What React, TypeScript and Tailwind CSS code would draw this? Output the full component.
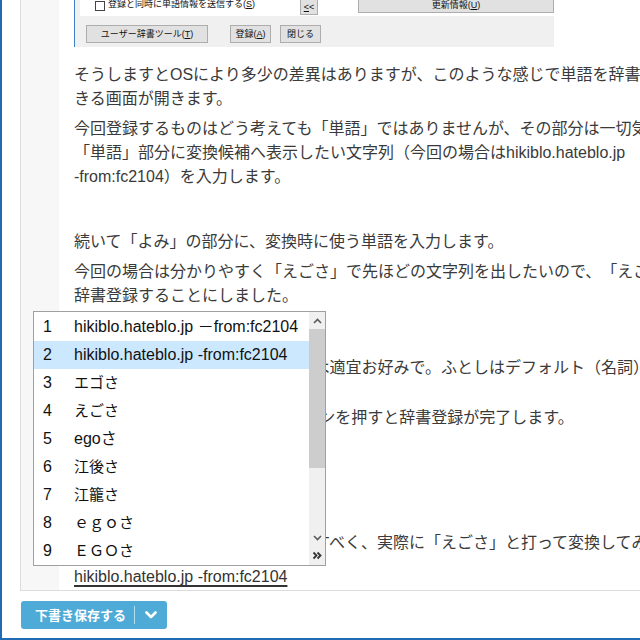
import clsx from 'clsx';

const candidates = [
  { text: 'hikiblo.hateblo.jp －from:fc2104', size: 'text-[16px]' },
  { text: 'hikiblo.hateblo.jp -from:fc2104', size: 'text-[16px]' },
  { text: 'エゴさ', size: 'text-[15px]' },
  { text: 'えごさ', size: 'text-[15px]' },
  { text: 'egoさ', size: 'text-[16px]' },
  { text: '江後さ', size: 'text-[15px]' },
  { text: '江籠さ', size: 'text-[15px]' },
  { text: 'ｅｇｏさ', size: 'text-[15px]' },
  { text: 'ＥＧＯさ', size: 'text-[15px]' },
];

const DialogShot = () => {
  return (
    <div className="flex h-[47px] w-[480px] flex-col border-l border-[#3b82c8] bg-[#f0f0f0] text-[9px] leading-[12px] text-[#111]">
      <div className="ml-[5px] flex h-[16px] items-start bg-white">
        <div className="flex w-[220px] items-start">
          <span className="ml-[15px] mt-[1px] h-[10px] w-[10px] border border-[#444] bg-white" />
          <span className="ml-[3px] -mt-[2px]">
            登録と同時に単語情報を送信する(<span className="underline">S</span>)
          </span>
        </div>
        <div className="flex h-[15px] w-[18px] items-center justify-center border-x border-b border-[#adadad] bg-[#e1e1e1]">
          <span className="underline">&lt;</span>&lt;
        </div>
        <div className="w-[40px]" />
        <div className="flex h-[13px] w-[196px] items-center justify-center border-x border-b border-[#adadad] bg-[#e1e1e1]">
          <span className="-mt-[2px]">
            更新情報(<span className="underline">U</span>)
          </span>
        </div>
      </div>
      <div className="flex flex-1 items-start pl-[11px] pt-[9px]">
        <div className="flex h-[18px] w-[122px] items-center justify-center border border-[#adadad] bg-[#e1e1e1]">
          ユーザー辞書ツール(<span className="underline">T</span>)
        </div>
        <div className="ml-[22px] flex h-[18px] w-[41px] items-center justify-center border border-[#adadad] bg-[#e1e1e1]">
          登録(<span className="underline">A</span>)
        </div>
        <div className="ml-[9px] flex h-[18px] w-[41px] items-center justify-center border border-[#adadad] bg-[#e1e1e1]">
          閉じる
        </div>
      </div>
    </div>
  );
};

const CandidateWindow = () => {
  return (
    <div className="absolute left-[31px] top-[311px] flex h-[255px] w-[293px] border border-[#a0a0a0] bg-white text-[#111]">
      <div className="w-[275px] pt-[1px]">
        {candidates.map((c, i) => (
          <div key={i} className={clsx('flex h-[28px] items-center', i === 1 && 'bg-[#cce8ff]')}>
            <span className="w-[40px] pl-[9px] text-[16px]">{i + 1}</span>
            <span className={clsx('whitespace-nowrap', c.size)}>{c.text}</span>
          </div>
        ))}
      </div>
      <div className="flex w-[16px] flex-col bg-[#f0f0f0]">
        <div className="flex h-[17px] items-center justify-center">
          <svg width="9" height="6" viewBox="0 0 9 6">
            <path d="M1 5 4.5 1.5 8 5" stroke="#5a5a5a" strokeWidth="1.6" fill="none" />
          </svg>
        </div>
        <div className="h-[139px] bg-[#cdcdcd]" />
        <div className="flex-1" />
        <div className="flex h-[16px] items-center justify-center">
          <svg width="9" height="6" viewBox="0 0 9 6">
            <path d="M1 1 4.5 4.5 8 1" stroke="#5a5a5a" strokeWidth="1.6" fill="none" />
          </svg>
        </div>
        <div className="flex h-[19px] items-center justify-center">
          <svg width="11" height="9" viewBox="0 0 11 9">
            <path d="M1.5 1.5 4.5 4.5 1.5 7.5M5.5 1.5 8.5 4.5 5.5 7.5" stroke="#333" strokeWidth="1.8" fill="none" />
          </svg>
        </div>
      </div>
    </div>
  );
};

const SaveButton = () => {
  return (
    <div className="flex h-[28px] w-[146px] items-center rounded-[3px] bg-[#4eaad6] text-white">
      <span className="pl-[14px] pr-[8px] text-[13px] font-semibold leading-none">下書き保存する</span>
      <span className="h-[18px] w-px bg-white/60" />
      <span className="flex flex-1 justify-center">
        <svg width="12" height="8" viewBox="0 0 12 8">
          <path d="M1.5 1.5 6 6l4.5-4.5" stroke="white" strokeWidth="2.6" fill="none" strokeLinecap="round" strokeLinejoin="round" />
        </svg>
      </span>
    </div>
  );
};

export default function App() {
  return (
    <div className="relative h-[640px] w-[640px] overflow-hidden border-b-2 border-l-2 border-[#1f6cb5] bg-white font-['Liberation_Sans','Noto_Sans_CJK_JP',sans-serif] [text-spacing-trim:space-all]">
      <div className="ml-[18px] flex h-[591px] w-[720px] border-b border-l border-[#dcdcdc]">
        <div className="w-[38px] shrink-0 bg-[#f7f7f7]" />
        <div className="flex-1 pl-[15px] text-[16px] leading-[24px] text-[#3a3a3a]">
          <DialogShot />
          <p className="mt-[16px] w-[628px]">
            そうしますとOSにより多少の差異はありますが、このような感じで単語を辞書登録できる画面が開きます。
          </p>
          <p className="mt-[6px] w-[628px]">
            今回登録するものはどう考えても「単語」ではありませんが、その部分は一切気にせず「単語」部分に変換候補へ表示したい文字列（今回の場合はhikiblo.hateblo.jp{' '}
            <span className="whitespace-nowrap">-from:fc2104）</span>を入力します。
          </p>
          <p className="mt-[41px] w-[628px]">続いて「よみ」の部分に、変換時に使う単語を入力します。</p>
          <p className="mt-[6px] w-[628px]">
            今回の場合は分かりやすく「えごさ」で先ほどの文字列を出したいので、「えごさ」で辞書登録することにしました。
          </p>
          <p className="mt-[48px] w-[628px]">
            「品詞」などその他の部分の設定は適宜お好みで。ふとしはデフォルト（名詞）のままにしています。
          </p>
          <p className="mt-[2px] w-[628px]">最後に左下にある「登録(A)」ボタンを押すと辞書登録が完了します。</p>
          <p className="mt-[101px] w-[628px]">
            辞書にちゃんと登録できたか確認すべく、実際に「えごさ」と打って変換してみます。
          </p>
          <p className="mt-[10px] w-[628px]">
            <span className="text-[#333] underline decoration-2 underline-offset-[3px]">hikiblo.hateblo.jp -from:fc2104</span>
          </p>
        </div>
      </div>
      <div className="mt-[10px] pl-[19px]">
        <SaveButton />
      </div>
      <CandidateWindow />
    </div>
  );
}
